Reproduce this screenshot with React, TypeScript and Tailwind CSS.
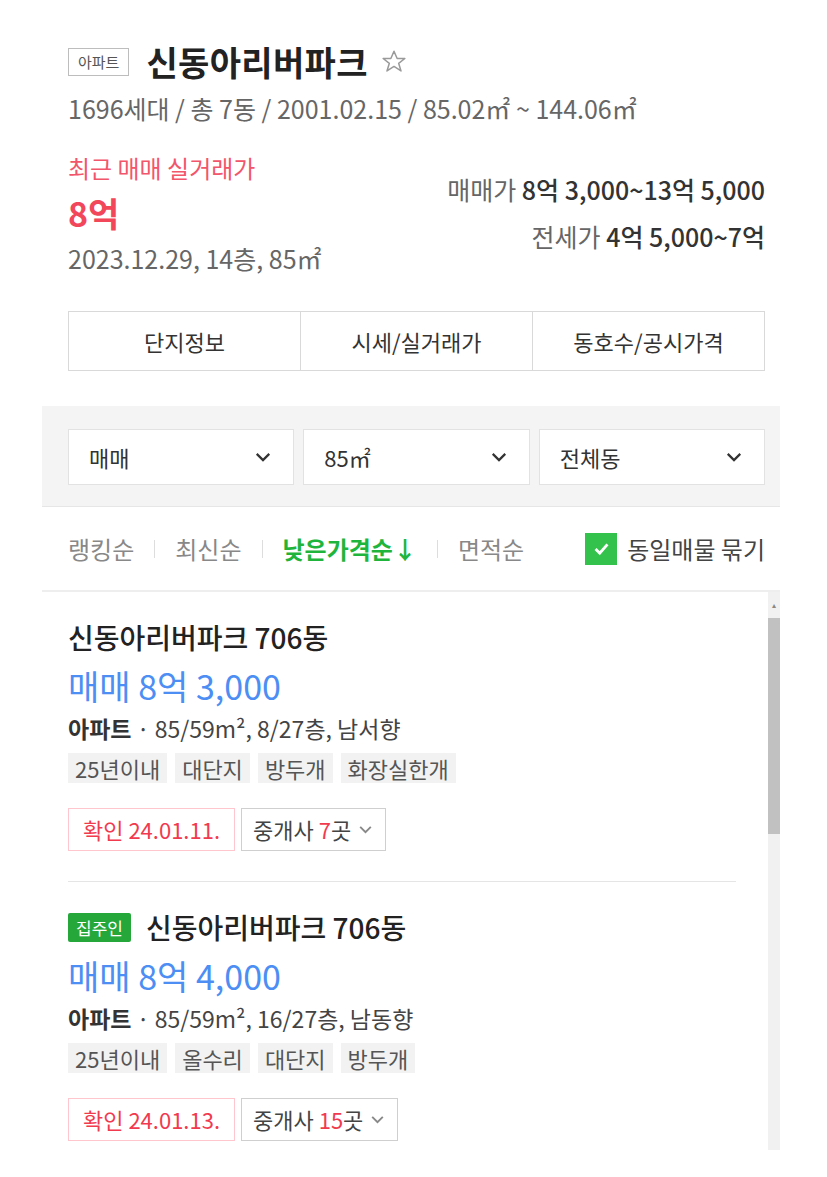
import React from "react";

const font = { fontFamily: '"Noto Sans CJK KR", "Noto Sans", sans-serif' };

type Listing = {
  owner?: boolean;
  title: string;
  price: string;
  info: string;
  tags: string[];
  confirmed: string;
  agents: number;
};

const listings: Listing[] = [
  {
    title: "신동아리버파크 706동",
    price: "매매 8억 3,000",
    info: "85/59m², 8/27층, 남서향",
    tags: ["25년이내", "대단지", "방두개", "화장실한개"],
    confirmed: "확인 24.01.11.",
    agents: 7,
  },
  {
    owner: true,
    title: "신동아리버파크 706동",
    price: "매매 8억 4,000",
    info: "85/59m², 16/27층, 남동향",
    tags: ["25년이내", "올수리", "대단지", "방두개"],
    confirmed: "확인 24.01.13.",
    agents: 15,
  },
];

const Chevron = ({ className }: { className?: string }) => (
  <svg viewBox="0 0 16 16" className={className} fill="none">
    <path d="M3 5.5 8 10.5 13 5.5" stroke="currentColor" strokeWidth="1.8" />
  </svg>
);

const SelectBox = ({ label }: { label: string }) => (
  <div className="flex h-[56px] flex-1 items-center justify-between border border-[#e2e2e2] bg-white pl-[20px] pr-[20px] text-[22px] text-[#333]">
    <span>{label}</span>
    <Chevron className="h-[20px] w-[20px] text-[#333]" />
  </div>
);

const ListingItem = ({ item, last }: { item: Listing; last: boolean }) => (
  <div className={`mr-[32px] pt-[25px] ${last ? "" : "border-b border-[#e5e5e5] pb-[30px]"}`}>
    <div className="flex items-center gap-[15px]">
      {item.owner && (
        <span className="rounded-[2px] bg-[#25a73a] px-[8px] text-[17px] leading-[29px] text-white">
          집주인
        </span>
      )}
      <h3 className="text-[28px] font-medium leading-[40px] text-[#222]">{item.title}</h3>
    </div>
    <p className="mt-[7px] text-[34px] leading-[44px] text-[#4c8ef3]">{item.price}</p>
    <p className="mt-[5px] text-[23px] leading-[30px] text-[#444]">
      <span className="font-bold text-[#333]">아파트</span> · {item.info}
    </p>
    <div className="mt-[10px] flex gap-[8px]">
      {item.tags.map((t) => (
        <span key={t} className="bg-[#f2f2f2] px-[7px] text-[22px] leading-[30px] text-[#555]">
          {t}
        </span>
      ))}
    </div>
    <div className="mt-[25px] flex gap-[6px]">
      <span className="flex h-[43px] items-center border border-[#ffc7cd] px-[14px] text-[22px] text-[#f23a4f]">
        {item.confirmed}
      </span>
      <span className="flex h-[43px] items-center gap-[6px] border border-[#cfcfcf] px-[11px] text-[22px] text-[#444]">
        <span>
          중개사 <span className="text-[#f23a4f]">{item.agents}</span>곳
        </span>
        <Chevron className="h-[17px] w-[17px] text-[#888]" />
      </span>
    </div>
  </div>
);

export default function App() {
  return (
    <div className="h-[1177px] w-[827px] bg-white pl-[42px]" style={font}>
      <div className="w-[738px]">
        {/* header */}
        <div className="pl-[26px] pr-[15px] pt-[40px]">
          <div className="flex items-center">
            <span className="border border-[#bdbdbd] px-[9px] text-[15px] leading-[26px] text-[#555]">아파트</span>
            <h1 className="ml-[17px] text-[34px] font-bold leading-[44px] tracking-[0.01em] text-[#222]">
              신동아리버파크
            </h1>
            <svg viewBox="0 0 24 24" className="ml-[12px] h-[28px] w-[28px]" fill="none">
              <path
                d="M12 2.8 14.7 9h6.6l-5.3 4.1 2 6.6L12 15.8l-6 3.9 2-6.6L2.7 9h6.6Z"
                stroke="#9a9a9a"
                strokeWidth="1.3"
                strokeLinejoin="round"
              />
            </svg>
          </div>
          <p className="mt-[8px] text-[25px] leading-[32px] text-[#666]">
            1696세대 / 총 7동 / 2001.02.15 / 85.02㎡ ~ 144.06㎡
          </p>
          <div className="mt-[28px] flex justify-between">
            <div>
              <p className="text-[24px] leading-[32px] text-[#f2566a]">최근 매매 실거래가</p>
              <p className="mt-[8px] text-[34px] font-bold leading-[42px] text-[#f2475b]">8억</p>
              <p className="mt-[8px] text-[25px] leading-[32px] text-[#666]">2023.12.29, 14층, 85㎡</p>
            </div>
            <div className="pt-[21px] text-right text-[25px] leading-[32px]">
              <p>
                <span className="text-[#666]">매매가 </span>
                <span className="font-medium text-[#333]">8억 3,000~13억 5,000</span>
              </p>
              <p className="mt-[15px]">
                <span className="text-[#666]">전세가 </span>
                <span className="font-medium text-[#333]">4억 5,000~7억</span>
              </p>
            </div>
          </div>
          <div className="mt-[37px] flex h-[60px] border border-[#d9d9d9] text-[22px] text-[#333]">
            <div className="flex flex-1 items-center justify-center border-r border-[#d9d9d9]">단지정보</div>
            <div className="flex flex-1 items-center justify-center border-r border-[#d9d9d9]">시세/실거래가</div>
            <div className="flex flex-1 items-center justify-center">동호수/공시가격</div>
          </div>
        </div>

        {/* filters */}
        <div className="mt-[35px] flex gap-[9px] border-b border-[#e6e6e6] bg-[#f4f4f4] pb-[21px] pl-[26px] pr-[15px] pt-[23px]">
          <SelectBox label="매매" />
          <SelectBox label="85㎡" />
          <SelectBox label="전체동" />
        </div>

        {/* sort */}
        <div className="flex h-[85px] items-center justify-between border-b-2 border-[#eeeeee] pl-[26px] pr-[15px] text-[24px]">
          <div className="flex items-center text-[#888]">
            <span>랭킹순</span>
            <span className="mx-[20px] h-[18px] w-px bg-[#ddd]" />
            <span>최신순</span>
            <span className="mx-[20px] h-[18px] w-px bg-[#ddd]" />
            <span className="font-bold text-[#1fb53d]">낮은가격순↓</span>
            <span className="mx-[20px] h-[18px] w-px bg-[#ddd]" />
            <span>면적순</span>
          </div>
          <div className="flex items-center gap-[10px] text-[#444]">
            <span className="flex h-[32px] w-[32px] items-center justify-center bg-[#33c24b]">
              <svg viewBox="0 0 16 16" className="h-[19px] w-[19px]" fill="none">
                <path d="M3 8.5 6.5 12 13 4.5" stroke="white" strokeWidth="2.4" />
              </svg>
            </span>
            <span>동일매물 묶기</span>
          </div>
        </div>

        {/* list */}
        <div className="flex h-[558px]">
          <div className="flex-1 overflow-hidden pl-[26px]">
            {listings.map((l, i) => (
              <ListingItem key={i} item={l} last={i === listings.length - 1} />
            ))}
          </div>
          <div className="flex w-[12px] flex-col bg-[#f1f1f1]">
            <div className="flex h-[26px] items-center justify-center text-[8px] text-[#888]">▴</div>
            <div className="h-[216px] bg-[#c1c1c1]" />
          </div>
        </div>
      </div>
    </div>
  );
}
